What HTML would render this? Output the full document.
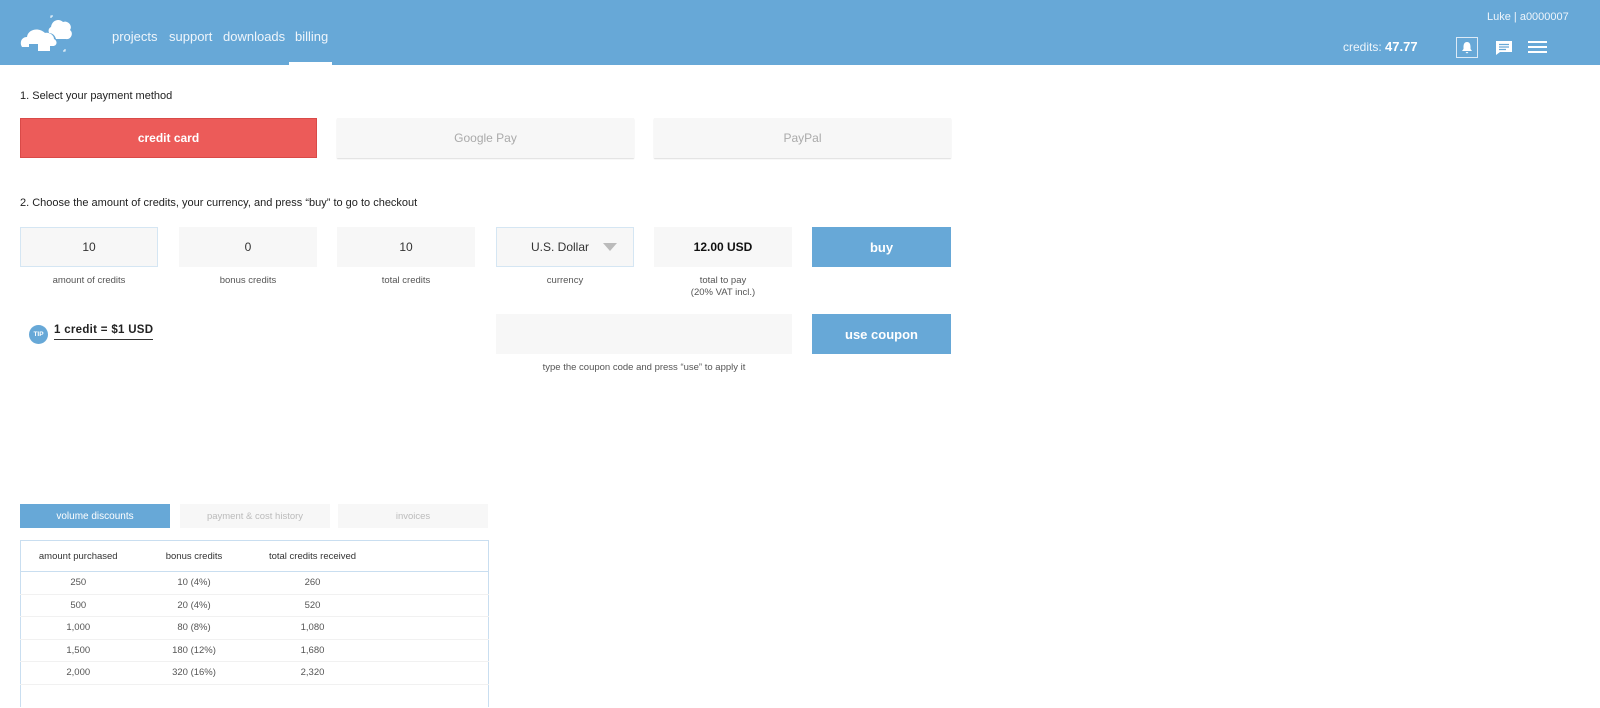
<!DOCTYPE html>
<html><head><meta charset="utf-8"><style>
*{box-sizing:border-box;margin:0;padding:0}
body{width:1600px;height:708px;overflow:hidden;background:#fff;font-family:"Liberation Sans",sans-serif;color:#222;position:relative}
.hdr{position:absolute;left:0;top:0;width:1600px;height:65px;background:#67a8d7;color:#fff}
.nav{position:absolute;top:29px;font-size:13px;color:#eef5fb}
.a{position:absolute}
.btn{position:absolute;height:40px;display:flex;align-items:center;justify-content:center;font-size:12px}
.box{position:absolute;top:227px;width:138px;height:40px;background:#f7f7f7;display:flex;align-items:center;justify-content:center;font-size:12px;color:#333}
.lbl{position:absolute;width:138px;text-align:center;font-size:9.5px;color:#555;top:275px;line-height:12px}
.tab{position:absolute;top:504px;width:150px;height:24px;display:flex;align-items:center;justify-content:center;font-size:9.5px;color:#bbb;background:#f7f7f7}
table{position:absolute;left:20px;top:540px;width:469px;border:1px solid #c9def0;border-bottom:none;border-collapse:collapse;font-size:9.5px;color:#555}
td,th{height:22.5px;text-align:center}
th{height:31px;font-weight:normal;color:#333;border-bottom:1px solid #c9def0}
tr+tr td{border-top:1px solid #f1f1f1}
</style></head><body>
<div class="hdr">
<svg class="a" style="left:20px;top:14px" width="54" height="40" viewBox="0 0 54 40"><path d="M1 31 C0 26 3 23 7 23 C8 15 19 13 25 19 C29 18 34 21 34 25 C38 27 37 32 33 32 L30 32 L30 37 L18 37 L18 30 L9 30 L9 33 L2 33Z" fill="#fff"/><path d="M31 13 C32 6 39 4 43 8 C48 6 53 12 50 16 C54 19 51 26 46 25 L36 25 C35 21 32 19 29 19 C28 16 29 14 31 13Z" fill="#fff"/><path d="M33 2 L31 2 L31 4 M43 37 L45 37 L45 35" stroke="#fff" fill="none"/></svg>
<div class="nav" style="left:112px">projects</div>
<div class="nav" style="left:169px">support</div>
<div class="nav" style="left:223px">downloads</div>
<div class="nav" style="left:295px">billing</div>
<div class="a" style="left:289px;top:62px;width:43px;height:3px;background:#fff"></div>
<div class="a" style="left:1487px;top:11px;font-size:11px;color:#eef5fb">Luke | a0000007</div>
<div class="a" style="left:1343px;top:39px;font-size:12px;color:#eef5fb">credits: <b style="font-size:13px;color:#fff">47.77</b></div>
<div class="a" style="left:1456px;top:37px;width:22px;height:21px;border:1px solid #dceaf6"></div>
<svg class="a" style="left:1461px;top:41px" width="12" height="13" viewBox="0 0 12 13"><path d="M6 1 C3 1 2.5 4 2.5 6 L2.5 8 L1 10 L11 10 L9.5 8 L9.5 6 C9.5 4 9 1 6 1Z M4.5 11 L7.5 11 L6 12.5Z" fill="#fff"/></svg>
<svg class="a" style="left:1495px;top:40px" width="18" height="16" viewBox="0 0 18 16"><path d="M1 1 H17 V12 H5 L1 15Z" fill="#fff"/><path d="M4 4.5H14M4 7H14M4 9.5H11" stroke="#67a8d7" stroke-width="1.2"/></svg>
<svg class="a" style="left:1528px;top:40px" width="19" height="14"><path d="M0 2H19M0 7H19M0 12H19" stroke="#fff" stroke-width="2"/></svg>
</div>
<div class="a" style="left:20px;top:90px;font-size:11px">1. Select your payment method</div>
<div class="btn" style="left:20px;top:118px;width:297px;background:#ec5b59;border:1px solid #d94a48;color:#fff;font-weight:bold">credit card</div>
<div class="btn" style="left:337px;top:118px;width:297px;background:#f7f7f7;color:#aaa;box-shadow:0 1px 1px #ddd">Google Pay</div>
<div class="btn" style="left:654px;top:118px;width:297px;background:#f7f7f7;color:#aaa;box-shadow:0 1px 1px #ddd">PayPal</div>
<div class="a" style="left:20px;top:197px;font-size:11px">2. Choose the amount of credits, your currency, and press “buy” to go to checkout</div>
<div class="box" style="left:20px;border:1px solid #d5e6f3">10</div>
<div class="box" style="left:179px">0</div>
<div class="box" style="left:337px">10</div>
<div class="box" style="left:496px;border:1px solid #d5e6f3;justify-content:flex-start;padding-left:34px">U.S. Dollar<span style="position:absolute;right:16px;top:15px;border-left:7px solid transparent;border-right:7px solid transparent;border-top:8px solid #bbb"></span></div>
<div class="box" style="left:654px;font-weight:bold;color:#111">12.00 USD</div>
<div class="btn" style="left:812px;top:227px;width:139px;background:#67a8d7;color:#fff;font-weight:bold;font-size:13px">buy</div>
<div class="lbl" style="left:20px">amount of credits</div>
<div class="lbl" style="left:179px">bonus credits</div>
<div class="lbl" style="left:337px">total credits</div>
<div class="lbl" style="left:496px">currency</div>
<div class="lbl" style="left:654px">total to pay<br>(20% VAT incl.)</div>
<div class="a" style="left:29px;top:325px;width:19px;height:19px;border-radius:50%;background:#67a8d7;color:#fff;font-size:6.5px;font-weight:bold;text-align:center;line-height:19px">TIP</div>
<div class="a" style="left:54px;top:324px;font-size:11.5px;font-weight:bold;border-bottom:1px solid #333;padding-bottom:3px;letter-spacing:0.3px">1 credit = $1 USD</div>
<div class="a" style="left:496px;top:314px;width:296px;height:40px;background:#f7f7f7"></div>
<div class="btn" style="left:812px;top:314px;width:139px;background:#67a8d7;color:#fff;font-weight:bold;font-size:13px">use coupon</div>
<div class="a" style="left:496px;top:362px;width:296px;text-align:center;font-size:9.5px;color:#555">type the coupon code and press “use” to apply it</div>
<div class="tab" style="left:20px;background:#67a8d7;color:#fff;font-size:10px">volume discounts</div>
<div class="tab" style="left:180px">payment &amp; cost history</div>
<div class="tab" style="left:338px">invoices</div>
<table>
<tr><th style="width:115px">amount purchased</th><th style="width:117px">bonus credits</th><th style="width:120px">total credits received</th><th></th></tr>
<tr><td>250</td><td>10 (4%)</td><td>260</td><td></td></tr>
<tr><td>500</td><td>20 (4%)</td><td>520</td><td></td></tr>
<tr><td>1,000</td><td>80 (8%)</td><td>1,080</td><td></td></tr>
<tr><td>1,500</td><td>180 (12%)</td><td>1,680</td><td></td></tr>
<tr><td>2,000</td><td>320 (16%)</td><td>2,320</td><td></td></tr>
<tr><td></td><td></td><td></td><td></td></tr>
</table>
</body></html>
